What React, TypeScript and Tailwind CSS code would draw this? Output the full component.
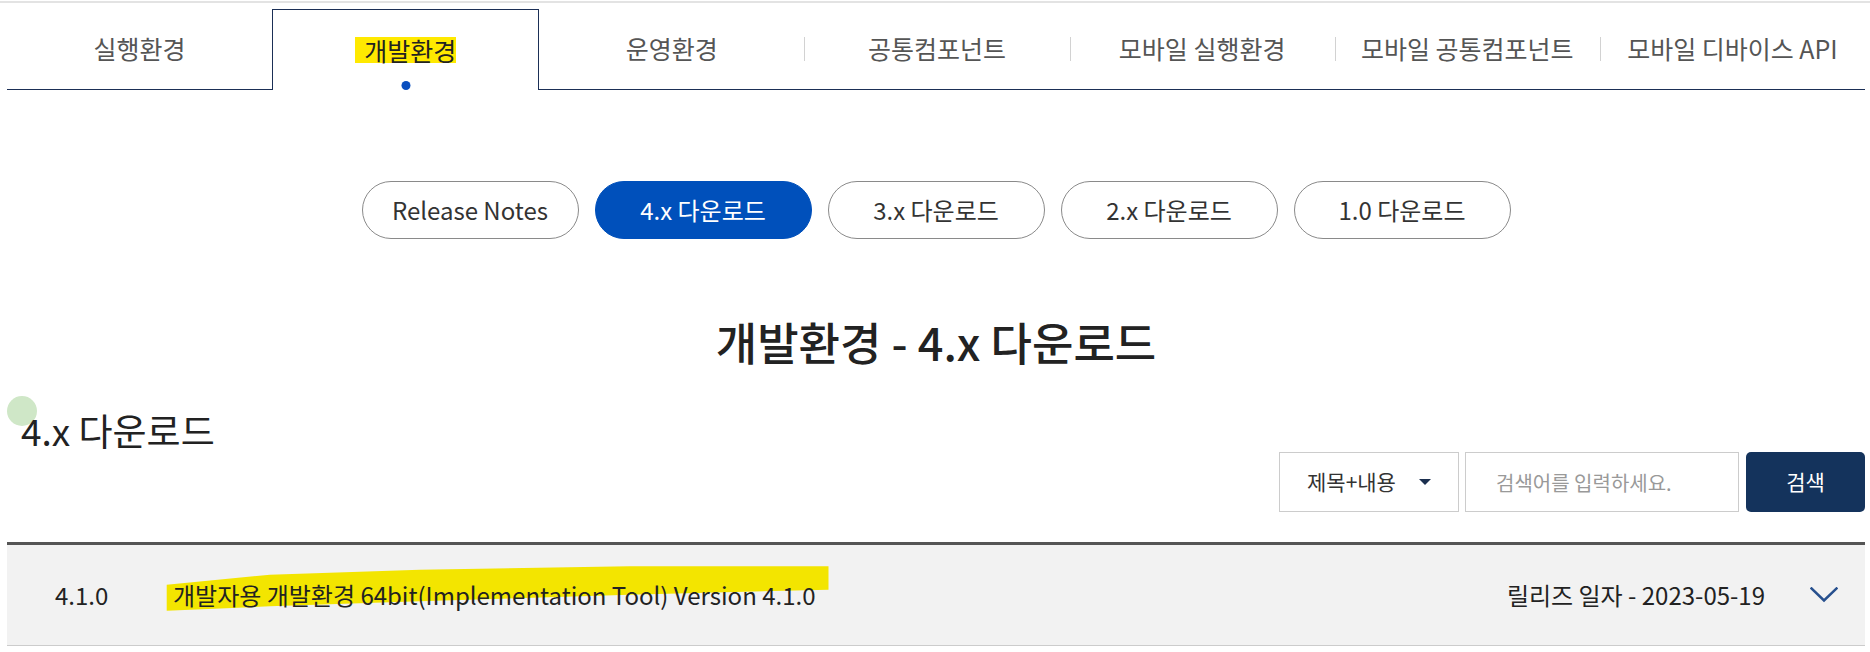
import { type ReactNode } from "react";

const tabs = [
  "실행환경",
  "개발환경",
  "운영환경",
  "공통컴포넌트",
  "모바일 실행환경",
  "모바일 공통컴포넌트",
  "모바일 디바이스 API",
];

const versionLinks = [
  "Release Notes",
  "4.x 다운로드",
  "3.x 다운로드",
  "2.x 다운로드",
  "1.0 다운로드",
];

export default function App() {
  return (
    <div className="min-h-[652px] bg-white pt-px text-[#222] [font-family:'Noto_Sans_CJK_KR','Noto_Sans',sans-serif]">
      <div className="h-[2px] bg-[#e3e3e3]" />

      <div className="ml-[7px] mr-[5px]">
        <TabNav activeIndex={1} />

        <nav className="mt-[91px] flex justify-center gap-[16px]">
          {versionLinks.map((label) => (
            <button
              className={`flex h-[58px] w-[217px] items-center justify-center rounded-full border text-[24px] ${
                label === "4.x 다운로드"
                  ? "border-[#0050bb] bg-[#0050bb] text-white"
                  : "border-[#8a8a8a] bg-white text-[#333]"
              }`}
              key={label}
              type="button"
            >
              {label}
            </button>
          ))}
        </nav>

        <h2 className="mt-[73px] text-center text-[45px] font-medium leading-[60px] text-[#222]">
          개발환경 - 4.x 다운로드
        </h2>

        <section className="relative mt-[38px]">
          <span className="absolute left-0 top-[-14px] size-[30px] rounded-full bg-[#cfe7c7]" />
          <h3 className="relative pl-[14px] text-[37px] leading-[40px] text-[#222]">
            4.x 다운로드
          </h3>
        </section>

        <SearchBar />

        <DownloadRow
          date="2023-05-19"
          title="개발자용 개발환경 64bit(Implementation Tool) Version 4.1.0"
          version="4.1.0"
        />
      </div>
    </div>
  );
}

function TabNav({ activeIndex }: { activeIndex: number }) {
  return (
    <ul className="mt-[6px] flex items-start border-b border-[#1b2f56]">
      {tabs.map((tab, index) => {
        const isActive = index === activeIndex;
        const hasDivider = index > activeIndex + 1;

        return (
          <li
            className={`relative flex flex-1 items-center justify-center text-[25px] ${
              isActive
                ? "-mb-px h-[81px] border border-b-0 border-[#1b2f56] bg-white text-[#222]"
                : "h-20 text-[#555]"
            }`}
            key={tab}
          >
            {hasDivider && (
              <span className="absolute left-0 top-[28px] h-6 w-px bg-[#d2d2d2]" />
            )}
            {isActive ? (
              <>
                <span className="-mt-px inline-block h-[26px] bg-[#ffe900] pl-[9px] leading-[26px]">
                  {tab}
                </span>
                <span className="absolute bottom-0 left-1/2 size-[9px] -translate-x-1/2 rounded-full bg-[#0a4fbf]" />
              </>
            ) : (
              tab
            )}
          </li>
        );
      })}
    </ul>
  );
}

function SearchBar() {
  return (
    <form className="mt-[2px] flex justify-end text-[21px]">
      <button
        className="flex h-[60px] w-[180px] items-center justify-between border border-[#cccccc] bg-white px-[27px] text-[#333]"
        type="button"
      >
        제목+내용
        <svg aria-hidden="true" className="h-[6px] w-[12px]" viewBox="0 0 12 6">
          <polygon fill="#1b2f4f" points="0,0 12,0 6,6" />
        </svg>
      </button>
      <input
        className="ml-[6px] h-[60px] w-[274px] border border-[#cccccc] bg-white pl-[30px] text-[20px] text-[#333] outline-none placeholder:text-[#999]"
        placeholder="검색어를 입력하세요."
        type="text"
      />
      <button
        className="ml-[7px] h-[60px] w-[119px] rounded-[5px] bg-[#14335c] text-white"
        type="submit"
      >
        검색
      </button>
    </form>
  );
}

function DownloadRow({
  date,
  title,
  version,
}: {
  date: string;
  title: string;
  version: string;
}) {
  return (
    <div className="mt-[30px] border-t-[3px] border-[#555]">
      <div className="flex h-[101px] items-center border-b border-[#cccccc] bg-[#f2f2f2] pr-[27px] text-[24px] text-[#222]">
        <span className="w-[166px] pl-[48px]">{version}</span>
        <span className="flex-1">
          <Highlighted>{title}</Highlighted>
        </span>
        <span className="mr-[45px]">릴리즈 일자 - {date}</span>
        <svg
          aria-hidden="true"
          className="h-[16px] w-[28px]"
          fill="none"
          stroke="#27508e"
          strokeLinecap="square"
          strokeWidth="2.5"
          viewBox="0 0 28 16"
        >
          <polyline points="1.5,1.5 14,13.5 26.5,1.5" />
        </svg>
      </div>
    </div>
  );
}

function Highlighted({ children }: { children: ReactNode }) {
  return (
    <span className="relative isolate inline-block">
      <svg
        aria-hidden="true"
        className="absolute left-[-7px] top-[-12px] -z-10 h-[48px] w-[664px]"
        viewBox="0 0 664 48"
      >
        <polygon
          fill="#f3e500"
          points="0.7,19.7 103.8,9.7 253.7,4.7 463.5,1.3 662.5,1.3 662.5,24.7 463.5,29.7 253.7,36.3 103.8,41.3 0.7,45.7"
        />
      </svg>
      {children}
    </span>
  );
}
